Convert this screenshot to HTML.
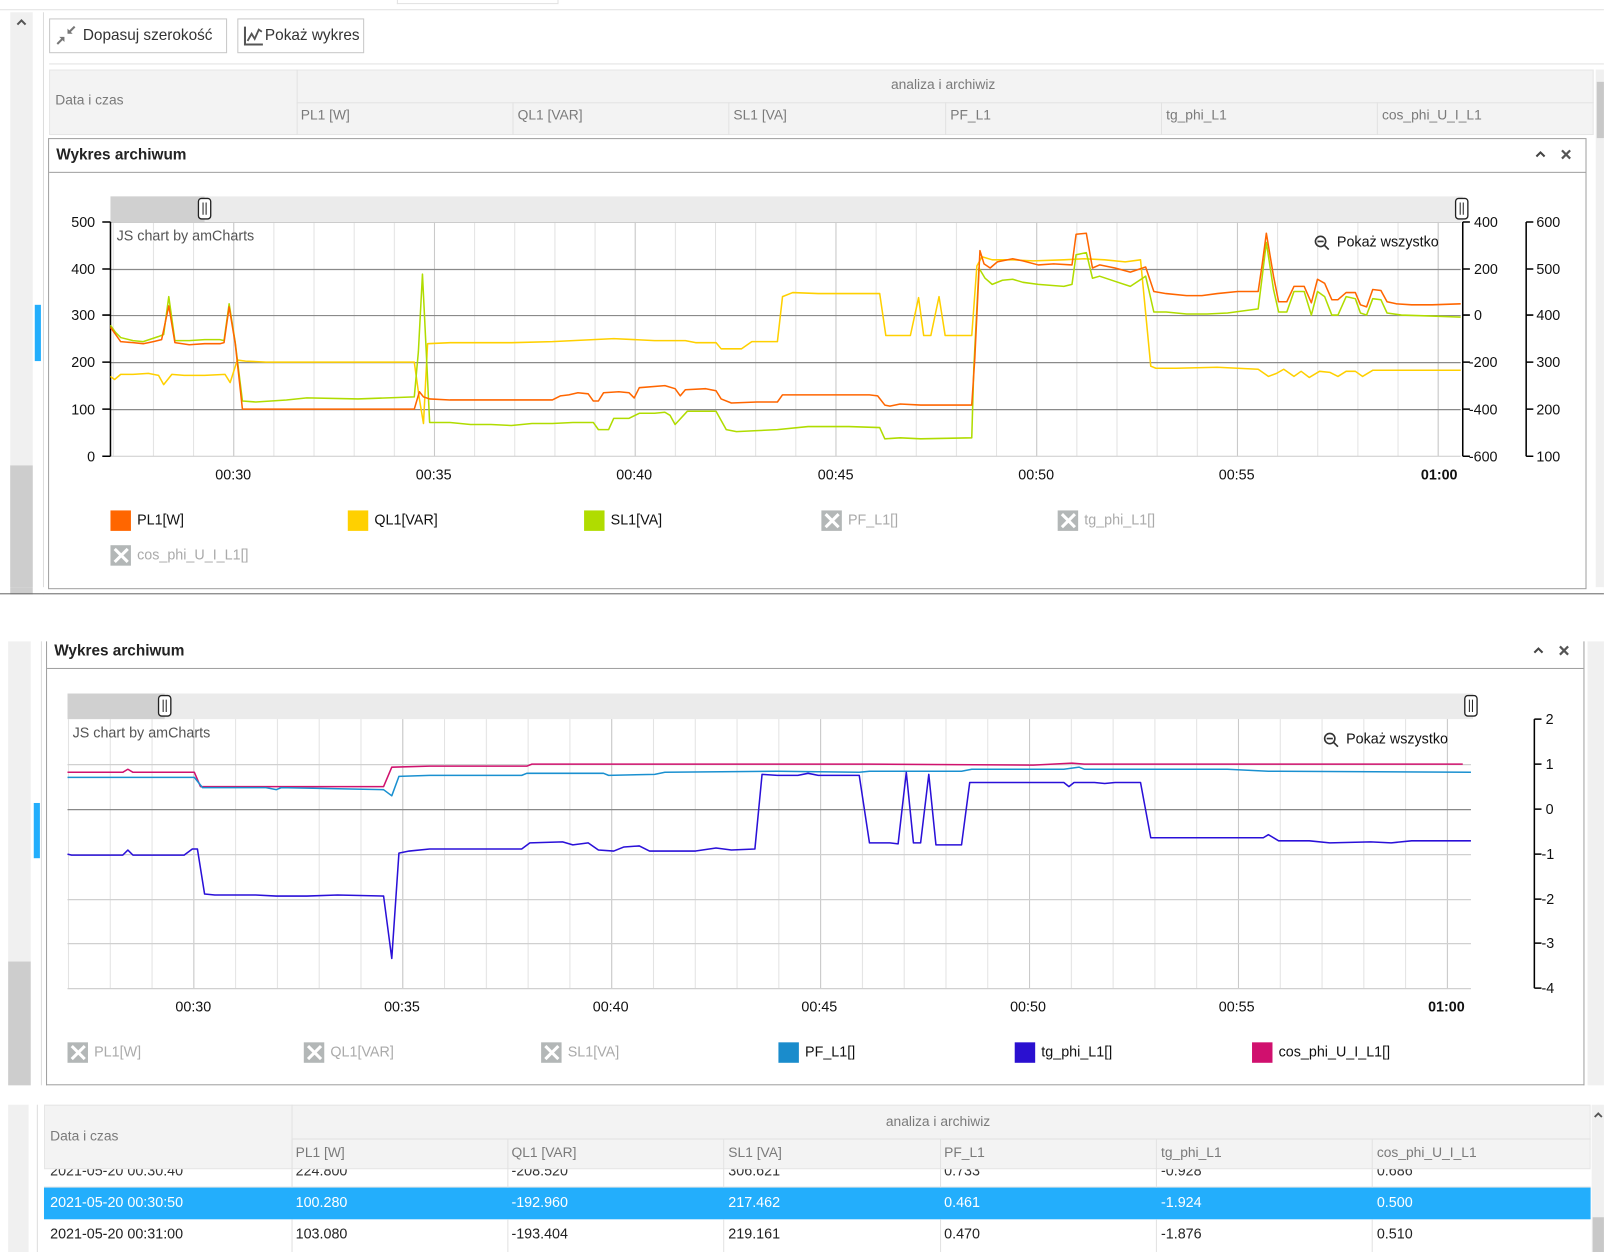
<!DOCTYPE html>
<html><head><meta charset="utf-8">
<style>
*{margin:0;padding:0;box-sizing:border-box}
html,body{width:1604px;height:1252px;overflow:hidden;background:#fff}
#c{position:absolute;left:0;top:0;width:1568px;height:1224px;transform:scale(1.0229);transform-origin:0 0;font-family:"Liberation Sans",sans-serif;color:#222}
.a{position:absolute}
.btn{position:absolute;border:1px solid #c8c8c8;background:#fff;font-size:15px;color:#333;height:34px;line-height:32px}
.th{position:absolute;font-size:13.5px;color:#7a7a7a}
.panel{position:absolute;border:1px solid #a0a0a0;background:#fff}
.ttl{position:absolute;font-weight:bold;font-size:15px;color:#222}
.lg{position:absolute;font-size:14px;color:#111}
.lg i{position:absolute;left:0;top:-1px;width:20px;height:20px}
.lg span{position:absolute;left:26px;top:0;white-space:nowrap}
.lg.off span{color:#aaa}
.x{background:#b3b7b7}
.x:before,.x:after{content:"";position:absolute;left:9px;top:1px;width:3px;height:18px;background:#fff;transform:rotate(45deg)}
.x:after{transform:rotate(-45deg)}
.cell{position:absolute;font-size:14px;white-space:nowrap}
</style></head><body><div id="c">

<!-- top strip -->
<div class="a" style="left:0;top:0;width:1568px;height:10px;border-bottom:1px solid #e2e2e2"></div>
<div class="a" style="left:388px;top:0;width:158px;height:4px;border-bottom:1px solid #e2e2e2;border-left:1px solid #e2e2e2;border-right:1px solid #e2e2e2"></div>

<!-- left scroll column top -->
<div class="a" style="left:10px;top:12px;width:22px;height:569px;background:#f0f0f0"></div>
<div class="a" style="left:10px;top:455px;width:22px;height:126px;background:#cdcdcd"></div>
<svg class="a" style="left:15px;top:17px" width="12" height="10"><path d="M2 7l4-4 4 4" stroke="#555" stroke-width="2" fill="none"/></svg>
<div class="a" style="left:34px;top:298px;width:6px;height:55px;background:#23aefc"></div>
<div class="a" style="left:42px;top:12px;width:1px;height:569px;background:#ddd"></div>

<!-- toolbar -->
<div class="btn" style="left:48px;top:18px;width:174px;padding-left:32px">Dopasuj szerokość</div>
<svg class="a" style="left:54px;top:24px" width="22" height="22" viewBox="0 0 22 22"><g stroke="#777" stroke-width="2" fill="#777"><line x1="2" y1="19" x2="8" y2="13"/><polygon points="4,12 9,12 9,17" stroke="none"/><line x1="19" y1="2" x2="13" y2="8"/><polygon points="12,4 12,9 17,9" stroke="none"/></g></svg>
<div class="btn" style="left:232px;top:18px;width:124px;padding-left:26px">Pokaż wykres</div>
<svg class="a" style="left:238px;top:25px" width="20" height="20" viewBox="0 0 20 20"><path d="M1.5 1v17.5H19" stroke="#555" stroke-width="2" fill="none"/><path d="M4 15l4-7 3 5 4-9 3 2" stroke="#555" stroke-width="1.8" fill="none"/></svg>
<div class="a" style="left:48px;top:62px;width:1520px;height:1px;background:#e2e2e2"></div>

<!-- top table header -->
<div class="a" style="left:48px;top:68px;width:1510px;height:64px;background:#f3f3f3;border:1px solid #e6e6e6"></div>
<div class="a" style="left:290px;top:68px;width:1px;height:64px;background:#e2e2e2"></div>
<div class="a" style="left:290px;top:100px;width:1268px;height:1px;background:#e2e2e2"></div>
<div class="th" style="left:54px;top:90px">Data i czas</div>
<div class="th" style="left:871px;top:75px">analiza i archiwiz</div>
<div class="a" style="left:501px;top:100px;width:1px;height:32px;background:#e2e2e2"></div>
<div class="a" style="left:712px;top:100px;width:1px;height:32px;background:#e2e2e2"></div>
<div class="a" style="left:924px;top:100px;width:1px;height:32px;background:#e2e2e2"></div>
<div class="a" style="left:1135px;top:100px;width:1px;height:32px;background:#e2e2e2"></div>
<div class="a" style="left:1346px;top:100px;width:1px;height:32px;background:#e2e2e2"></div>
<div class="th" style="left:294px;top:105px">PL1 [W]</div>
<div class="th" style="left:506px;top:105px">QL1 [VAR]</div>
<div class="th" style="left:717px;top:105px">SL1 [VA]</div>
<div class="th" style="left:929px;top:105px">PF_L1</div>
<div class="th" style="left:1140px;top:105px">tg_phi_L1</div>
<div class="th" style="left:1351px;top:105px">cos_phi_U_I_L1</div>
<div class="a" style="left:1560px;top:68px;width:8px;height:513px;background:#f0f0f0"></div>
<div class="a" style="left:1561px;top:80px;width:7px;height:55px;background:#c8c8c8"></div>
<!-- cut off row under panel -->
<div class="cell" style="left:52px;top:566px;color:#333">2021-05-20 00:27:20</div>
<div class="cell" style="left:294px;top:566px;color:#333">238.980</div>
<div class="cell" style="left:506px;top:566px;color:#333">-235.790</div>
<div class="cell" style="left:717px;top:566px;color:#333">340.194</div>
<div class="cell" style="left:929px;top:566px;color:#333">0.683</div>
<div class="cell" style="left:1140px;top:566px;color:#333">-1.005</div>
<div class="cell" style="left:1351px;top:566px;color:#333">0.730</div>
<div class="a" style="left:0;top:574px;width:1568px;height:7px;background:#fff"></div>
<div class="a" style="left:10px;top:574px;width:22px;height:7px;background:#cdcdcd"></div>
<div class="a" style="left:0;top:580px;width:1568px;height:1px;background:#666"></div>

<!-- top panel -->
<div class="panel" style="left:47px;top:135px;width:1504px;height:441px">
  <div class="ttl" style="left:7px;top:7px">Wykres archiwum</div>
  <svg class="a" style="left:1452px;top:10px" width="12" height="10"><path d="M2 7l4-4 4 4" stroke="#444" stroke-width="2" fill="none"/></svg>
  <svg class="a" style="left:1477px;top:9px" width="12" height="12"><path d="M2 2l8 8M10 2l-8 8" stroke="#555" stroke-width="2.2"/></svg>
  <div class="a" style="left:0;top:32px;width:1502px;height:1px;background:#a0a0a0"></div>
</div>
<svg class="a" style="left:48px;top:168px" width="1502" height="407" viewBox="48 168 1502 407">
<defs>
<pattern id="g1" patternUnits="userSpaceOnUse" x="228" y="0" width="39.25" height="10"><line x1="0.5" y1="0" x2="0.5" y2="10" stroke="#e2e2e2"/></pattern>
<pattern id="g1m" patternUnits="userSpaceOnUse" x="228" y="0" width="196.25" height="10"><line x1="0.5" y1="0" x2="0.5" y2="10" stroke="#c9c9c9"/></pattern>
</defs>
<rect x="108" y="192" width="1322" height="25" fill="#ebebeb"/>
<rect x="108" y="192" width="92" height="25" fill="#d0d0d0"/>
<rect x="194" y="194" width="12" height="20" rx="3" fill="#fff" stroke="#222" stroke-width="1.3"/><line x1="198.5" y1="198" x2="198.5" y2="210" stroke="#222"/><line x1="201.5" y1="198" x2="201.5" y2="210" stroke="#222"/>
<rect x="1423" y="194" width="12" height="20" rx="3" fill="#fff" stroke="#222" stroke-width="1.3"/><line x1="1427.5" y1="198" x2="1427.5" y2="210" stroke="#222"/><line x1="1430.5" y1="198" x2="1430.5" y2="210" stroke="#222"/>
<rect x="109" y="217" width="1319" height="229" fill="url(#g1)"/>
<rect x="109" y="217" width="1319" height="229" fill="url(#g1m)"/>
<g stroke="#8a8a8a" stroke-width="1.2"><line x1="108" y1="263.5" x2="1428" y2="263.5"/><line x1="108" y1="308.5" x2="1428" y2="308.5"/><line x1="108" y1="354.5" x2="1428" y2="354.5"/><line x1="108" y1="400.5" x2="1428" y2="400.5"/></g>
<line x1="108" y1="217.5" x2="1428" y2="217.5" stroke="#ccc"/>
<line x1="108" y1="446" x2="1428" y2="446" stroke="#ccc"/>
<g stroke="#000" stroke-width="1.5" fill="none">
<path d="M108 217V446"/><path d="M100 217h8M100 263h8M100 308h8M100 354h8M100 400h8M100 446h8"/>
<path d="M1430 217V446"/><path d="M1430 217h7M1430 263h7M1430 308h7M1430 354h7M1430 400h7M1430 446h7"/>
<path d="M1492 217V446"/><path d="M1492 217h7M1492 263h7M1492 308h7M1492 354h7M1492 400h7M1492 446h7"/>
</g>
<g font-size="14" fill="#111" font-family="Liberation Sans">
<text x="93" y="222" text-anchor="end">500</text><text x="93" y="268" text-anchor="end">400</text><text x="93" y="313" text-anchor="end">300</text><text x="93" y="359" text-anchor="end">200</text><text x="93" y="405" text-anchor="end">100</text><text x="93" y="451" text-anchor="end">0</text>
<text x="1441" y="222">400</text><text x="1441" y="268">200</text><text x="1441" y="313">0</text><text x="1436" y="359">-200</text><text x="1436" y="405">-400</text><text x="1436" y="451">-600</text>
<text x="1502" y="222">600</text><text x="1502" y="268">500</text><text x="1502" y="313">400</text><text x="1502" y="359">300</text><text x="1502" y="405">200</text><text x="1502" y="451">100</text>
<text x="228" y="469" text-anchor="middle">00:30</text><text x="424" y="469" text-anchor="middle">00:35</text><text x="620" y="469" text-anchor="middle">00:40</text><text x="817" y="469" text-anchor="middle">00:45</text><text x="1013" y="469" text-anchor="middle">00:50</text><text x="1209" y="469" text-anchor="middle">00:55</text><text x="1407" y="469" text-anchor="middle" font-weight="bold">01:00</text>
<text x="114" y="235" fill="#555">JS chart by amCharts</text>
<text x="1307" y="241">Pokaż wszystko</text>
</g>
<g stroke="#333" stroke-width="1.6" fill="none"><circle cx="1291" cy="236" r="5"/><path d="M1295 240l4 4"/><path d="M1288 236h6"/></g>
<g fill="none" stroke-width="1.5" stroke-linejoin="round">
<polyline stroke="#ffd000" points="108,368 112,371 118,366 130,366 145,365 155,367 160,376 168,366 180,367 200,367 220,366 225,374 232,352 240,353 260,354 300,354 400,354 405,354 410,390 414,414 418,336 440,335 500,335 540,334 600,331 640,333 670,333 680,335 700,335 705,341 725,341 735,334 760,334 765,290 775,286 800,287 860,287 866,328 890,328 898,291 903,328 910,328 918,290 924,328 950,328 955,260 960,251 970,254 990,254 1010,255 1040,254 1060,253 1080,254 1100,256 1115,254 1125,358 1130,360 1150,360 1190,359 1230,361 1240,368 1248,365 1255,361 1265,368 1272,363 1280,369 1290,363 1300,364 1308,368 1316,363 1325,363 1332,368 1342,362 1360,362 1380,362 1428,362"/>
<polyline stroke="#b0dc00" points="108,318 113,325 118,330 130,333 140,334 155,329 160,327 165,290 171,333 185,333 200,332 215,332 219,333 224,297 230,335 237,392 250,393 280,391 300,389 350,390 405,388 409,344 413,268 417,350 420,413 440,413 460,415 480,415 500,416 520,414 540,414 560,413 580,413 585,420 595,420 600,409 615,409 625,404 640,404 650,403 655,406 660,415 672,402 700,402 710,420 720,422 740,421 760,420 790,417 830,417 860,418 865,429 880,428 900,429 950,428 952,360 957,262 963,272 970,278 980,274 990,273 1000,276 1015,278 1040,280 1048,278 1052,249 1062,247 1068,272 1075,270 1090,275 1105,280 1120,270 1128,305 1140,305 1160,307 1180,307 1200,306 1230,302 1234,270 1238,237 1245,283 1250,305 1258,305 1265,285 1275,285 1282,308 1288,285 1295,290 1302,308 1308,308 1316,290 1325,292 1330,306 1336,308 1342,292 1350,293 1356,306 1370,308 1400,309 1428,310"/>
<polyline stroke="#ff6600" points="108,320 113,327 118,334 130,335 140,336 150,334 158,332 165,299 171,335 185,337 200,336 215,336 219,335 224,300 230,336 237,400 260,400 300,400 350,400 405,400 410,383 414,388 420,390 440,391 500,391 540,391 548,387 556,386 565,384 575,385 580,392 585,392 590,384 605,383 615,384 620,389 625,379 650,377 660,380 665,387 670,381 690,380 700,382 705,390 715,394 740,393 760,393 765,386 800,386 850,386 858,387 865,396 870,397 880,395 900,396 950,396 953,350 958,245 962,258 968,262 975,256 990,253 1000,255 1015,259 1030,258 1048,259 1052,229 1062,228 1068,262 1075,259 1090,262 1105,266 1120,261 1128,285 1140,287 1160,289 1175,289 1190,287 1210,285 1230,285 1234,258 1238,228 1245,270 1250,295 1258,295 1265,280 1275,280 1282,296 1288,273 1295,277 1302,293 1308,293 1316,286 1325,286 1330,298 1336,300 1342,283 1350,284 1356,295 1365,297 1380,298 1400,298 1428,297"/>
</g>
</svg>
<div class="lg" style="left:108px;top:500px"><i style="background:#ff6600"></i><span>PL1[W]</span></div>
<div class="lg" style="left:340px;top:500px"><i style="background:#ffd000"></i><span>QL1[VAR]</span></div>
<div class="lg" style="left:571px;top:500px"><i style="background:#b0dc00"></i><span>SL1[VA]</span></div>
<div class="lg off" style="left:803px;top:500px"><i class="x"></i><span>PF_L1[]</span></div>
<div class="lg off" style="left:1034px;top:500px"><i class="x"></i><span>tg_phi_L1[]</span></div>
<div class="lg off" style="left:108px;top:534px"><i class="x"></i><span>cos_phi_U_I_L1[]</span></div>

<!-- bottom screenshot -->
<div class="a" style="left:8px;top:627px;width:22px;height:434px;background:#f0f0f0"></div>
<div class="a" style="left:8px;top:940px;width:22px;height:121px;background:#cdcdcd"></div>
<div class="a" style="left:33px;top:785px;width:6px;height:54px;background:#23aefc"></div>
<div class="a" style="left:40px;top:627px;width:1px;height:434px;background:#ddd"></div>
<div class="a" style="left:1552px;top:627px;width:16px;height:434px;background:#f0f0f0"></div>

<div class="panel" style="left:45px;top:627px;width:1504px;height:434px;border-top:none">
  <div class="ttl" style="left:7px;top:1px">Wykres archiwum</div>
  <svg class="a" style="left:1452px;top:4px" width="12" height="10"><path d="M2 7l4-4 4 4" stroke="#444" stroke-width="2" fill="none"/></svg>
  <svg class="a" style="left:1477px;top:3px" width="12" height="12"><path d="M2 2l8 8M10 2l-8 8" stroke="#555" stroke-width="2.2"/></svg>
  <div class="a" style="left:0;top:26px;width:1502px;height:1px;background:#a0a0a0"></div>
</div>
<svg class="a" style="left:46px;top:654px" width="1502" height="406" viewBox="46 654 1502 406">
<defs>
<pattern id="g2" patternUnits="userSpaceOnUse" x="189" y="0" width="40.85" height="10"><line x1="0.5" y1="0" x2="0.5" y2="10" stroke="#e2e2e2"/></pattern>
<pattern id="g2m" patternUnits="userSpaceOnUse" x="189" y="0" width="204.25" height="10"><line x1="0.5" y1="0" x2="0.5" y2="10" stroke="#c9c9c9"/></pattern>
</defs>
<rect x="66" y="678" width="1374" height="25" fill="#ebebeb"/>
<rect x="66" y="678" width="95" height="25" fill="#d0d0d0"/>
<rect x="155" y="680" width="12" height="20" rx="3" fill="#fff" stroke="#222" stroke-width="1.3"/><line x1="159.5" y1="684" x2="159.5" y2="696" stroke="#222"/><line x1="162.5" y1="684" x2="162.5" y2="696" stroke="#222"/>
<rect x="1432" y="680" width="12" height="20" rx="3" fill="#fff" stroke="#222" stroke-width="1.3"/><line x1="1436.5" y1="684" x2="1436.5" y2="696" stroke="#222"/><line x1="1439.5" y1="684" x2="1439.5" y2="696" stroke="#222"/>
<rect x="66" y="703" width="1372" height="263" fill="url(#g2)"/>
<rect x="66" y="703" width="1372" height="263" fill="url(#g2m)"/>
<g stroke="#d0d0d0" stroke-width="1.2"><line x1="66" y1="747.5" x2="1438" y2="747.5"/><line x1="66" y1="835.5" x2="1438" y2="835.5"/><line x1="66" y1="879.5" x2="1438" y2="879.5"/><line x1="66" y1="922.5" x2="1438" y2="922.5"/><line x1="66" y1="966.5" x2="1438" y2="966.5"/></g>
<line x1="66" y1="791.5" x2="1438" y2="791.5" stroke="#888" stroke-width="1.2"/>
<g stroke="#000" stroke-width="1.5" fill="none"><path d="M1500 703V966"/><path d="M1500 703h7M1500 747h7M1500 791h7M1500 835h7M1500 879h7M1500 922h7M1500 966h7"/></g>
<g font-size="14" fill="#111" font-family="Liberation Sans">
<text x="1511" y="708">2</text><text x="1511" y="752">1</text><text x="1511" y="796">0</text><text x="1507" y="840">-1</text><text x="1507" y="884">-2</text><text x="1507" y="927">-3</text><text x="1507" y="971">-4</text>
<text x="189" y="989" text-anchor="middle">00:30</text><text x="393" y="989" text-anchor="middle">00:35</text><text x="597" y="989" text-anchor="middle">00:40</text><text x="801" y="989" text-anchor="middle">00:45</text><text x="1005" y="989" text-anchor="middle">00:50</text><text x="1209" y="989" text-anchor="middle">00:55</text><text x="1414" y="989" text-anchor="middle" font-weight="bold">01:00</text>
<text x="71" y="721" fill="#555">JS chart by amCharts</text>
<text x="1316" y="727">Pokaż wszystko</text>
</g>
<g stroke="#333" stroke-width="1.6" fill="none"><circle cx="1300" cy="722" r="5"/><path d="M1304 726l4 4"/><path d="M1297 722h6"/></g>
<g fill="none" stroke-width="1.5" stroke-linejoin="round">
<polyline stroke="#d0126e" points="66,755 90,755 120,755 125,752 130,755 190,755 196,769 250,769 375,769 383,750 420,749 515,749 520,747 780,747 850,747 1010,748 1048,746 1060,747 1430,747"/>
<polyline stroke="#1a90d0" points="66,760 180,760 190,760 198,770 260,770 270,772 275,770 375,772 383,778 390,759 420,758 510,758 515,756 590,756 595,758 640,757 650,755 760,754 840,755 850,754 940,754 950,752 1040,752 1055,750 1060,752 1200,752 1240,754 1250,754 1438,755"/>
<polyline stroke="#2a10d8" points="66,835 70,836 90,836 120,836 125,831 130,836 180,836 188,830 193,830 200,874 210,875 250,875 270,876 300,876 330,875 375,876 383,937 390,834 400,832 420,830 510,830 518,824 550,823 560,826 575,824 585,831 600,832 610,828 625,827 635,832 680,832 700,829 715,831 738,830 745,757 760,758 780,758 790,756 800,758 840,758 850,824 870,824 878,825 886,755 893,824 900,824 908,757 915,826 940,826 948,765 1000,765 1040,765 1045,769 1050,765 1070,765 1080,766 1090,765 1115,765 1125,819 1150,819 1200,819 1235,819 1240,816 1250,822 1280,822 1300,824 1340,823 1360,824 1380,822 1438,822"/>
</g>
</svg>
<div class="lg off" style="left:66px;top:1020px"><i class="x"></i><span>PL1[W]</span></div>
<div class="lg off" style="left:297px;top:1020px"><i class="x"></i><span>QL1[VAR]</span></div>
<div class="lg off" style="left:529px;top:1020px"><i class="x"></i><span>SL1[VA]</span></div>
<div class="lg" style="left:761px;top:1020px"><i style="background:#1a8ccc"></i><span>PF_L1[]</span></div>
<div class="lg" style="left:992px;top:1020px"><i style="background:#2a10d0"></i><span>tg_phi_L1[]</span></div>
<div class="lg" style="left:1224px;top:1020px"><i style="background:#d0106e"></i><span>cos_phi_U_I_L1[]</span></div>

<!-- bottom table -->
<div class="a" style="left:8px;top:1080px;width:20px;height:144px;background:#f0f0f0"></div>
<div class="a" style="left:36px;top:1080px;width:1px;height:144px;background:#ddd"></div>
<div class="cell" style="left:49px;top:1136px;color:#333">2021-05-20 00:30:40</div>
<div class="cell" style="left:289px;top:1136px;color:#333">224.800</div>
<div class="cell" style="left:500px;top:1136px;color:#333">-208.520</div>
<div class="cell" style="left:712px;top:1136px;color:#333">306.621</div>
<div class="cell" style="left:923px;top:1136px;color:#333">0.733</div>
<div class="cell" style="left:1135px;top:1136px;color:#333">-0.928</div>
<div class="cell" style="left:1346px;top:1136px;color:#333">0.686</div>
<div class="a" style="left:43px;top:1080px;width:1512px;height:63px;background:#f3f3f3;border:1px solid #e6e6e6"></div>
<div class="a" style="left:285px;top:1080px;width:1px;height:144px;background:#e2e2e2"></div>
<div class="a" style="left:285px;top:1113px;width:1270px;height:1px;background:#e2e2e2"></div>
<div class="th" style="left:49px;top:1103px">Data i czas</div>
<div class="th" style="left:866px;top:1089px">analiza i archiwiz</div>
<div class="th" style="left:289px;top:1119px">PL1 [W]</div>
<div class="th" style="left:500px;top:1119px">QL1 [VAR]</div>
<div class="th" style="left:712px;top:1119px">SL1 [VA]</div>
<div class="th" style="left:923px;top:1119px">PF_L1</div>
<div class="th" style="left:1135px;top:1119px">tg_phi_L1</div>
<div class="th" style="left:1346px;top:1119px">cos_phi_U_I_L1</div>
<div class="a" style="left:43px;top:1160px;width:1512px;height:1px;background:#e2e2e2"></div>
<div class="a" style="left:43px;top:1161px;width:1512px;height:31px;background:#23aefc"></div>
<div class="cell" style="left:49px;top:1167px;color:#fff">2021-05-20 00:30:50</div>
<div class="cell" style="left:289px;top:1167px;color:#fff">100.280</div>
<div class="cell" style="left:500px;top:1167px;color:#fff">-192.960</div>
<div class="cell" style="left:712px;top:1167px;color:#fff">217.462</div>
<div class="cell" style="left:923px;top:1167px;color:#fff">0.461</div>
<div class="cell" style="left:1135px;top:1167px;color:#fff">-1.924</div>
<div class="cell" style="left:1346px;top:1167px;color:#fff">0.500</div>
<div class="a" style="left:285px;top:1192px;width:1px;height:32px;background:#e2e2e2"></div>
<div class="a" style="left:496px;top:1192px;width:1px;height:32px;background:#e2e2e2"></div>
<div class="a" style="left:707px;top:1192px;width:1px;height:32px;background:#e2e2e2"></div>
<div class="a" style="left:919px;top:1192px;width:1px;height:32px;background:#e2e2e2"></div>
<div class="a" style="left:1130px;top:1192px;width:1px;height:32px;background:#e2e2e2"></div>
<div class="a" style="left:1341px;top:1192px;width:1px;height:32px;background:#e2e2e2"></div>
<div class="a" style="left:285px;top:1113px;width:1px;height:48px;background:#e2e2e2"></div>
<div class="a" style="left:496px;top:1113px;width:1px;height:48px;background:#e2e2e2"></div>
<div class="a" style="left:707px;top:1113px;width:1px;height:48px;background:#e2e2e2"></div>
<div class="a" style="left:919px;top:1113px;width:1px;height:48px;background:#e2e2e2"></div>
<div class="a" style="left:1130px;top:1113px;width:1px;height:48px;background:#e2e2e2"></div>
<div class="a" style="left:1341px;top:1113px;width:1px;height:48px;background:#e2e2e2"></div>
<div class="cell" style="left:49px;top:1198px;color:#222">2021-05-20 00:31:00</div>
<div class="cell" style="left:289px;top:1198px;color:#222">103.080</div>
<div class="cell" style="left:500px;top:1198px;color:#222">-193.404</div>
<div class="cell" style="left:712px;top:1198px;color:#222">219.161</div>
<div class="cell" style="left:923px;top:1198px;color:#222">0.470</div>
<div class="cell" style="left:1135px;top:1198px;color:#222">-1.876</div>
<div class="cell" style="left:1346px;top:1198px;color:#222">0.510</div>
<div class="a" style="left:1556px;top:1080px;width:12px;height:144px;background:#f0f0f0"></div>
<div class="a" style="left:1557px;top:1190px;width:11px;height:34px;background:#c8c8c8"></div>
<svg class="a" style="left:1557px;top:1086px" width="11" height="9"><path d="M2 6l3.5-3.5L9 6" stroke="#555" stroke-width="1.8" fill="none"/></svg>

</div></body></html>
